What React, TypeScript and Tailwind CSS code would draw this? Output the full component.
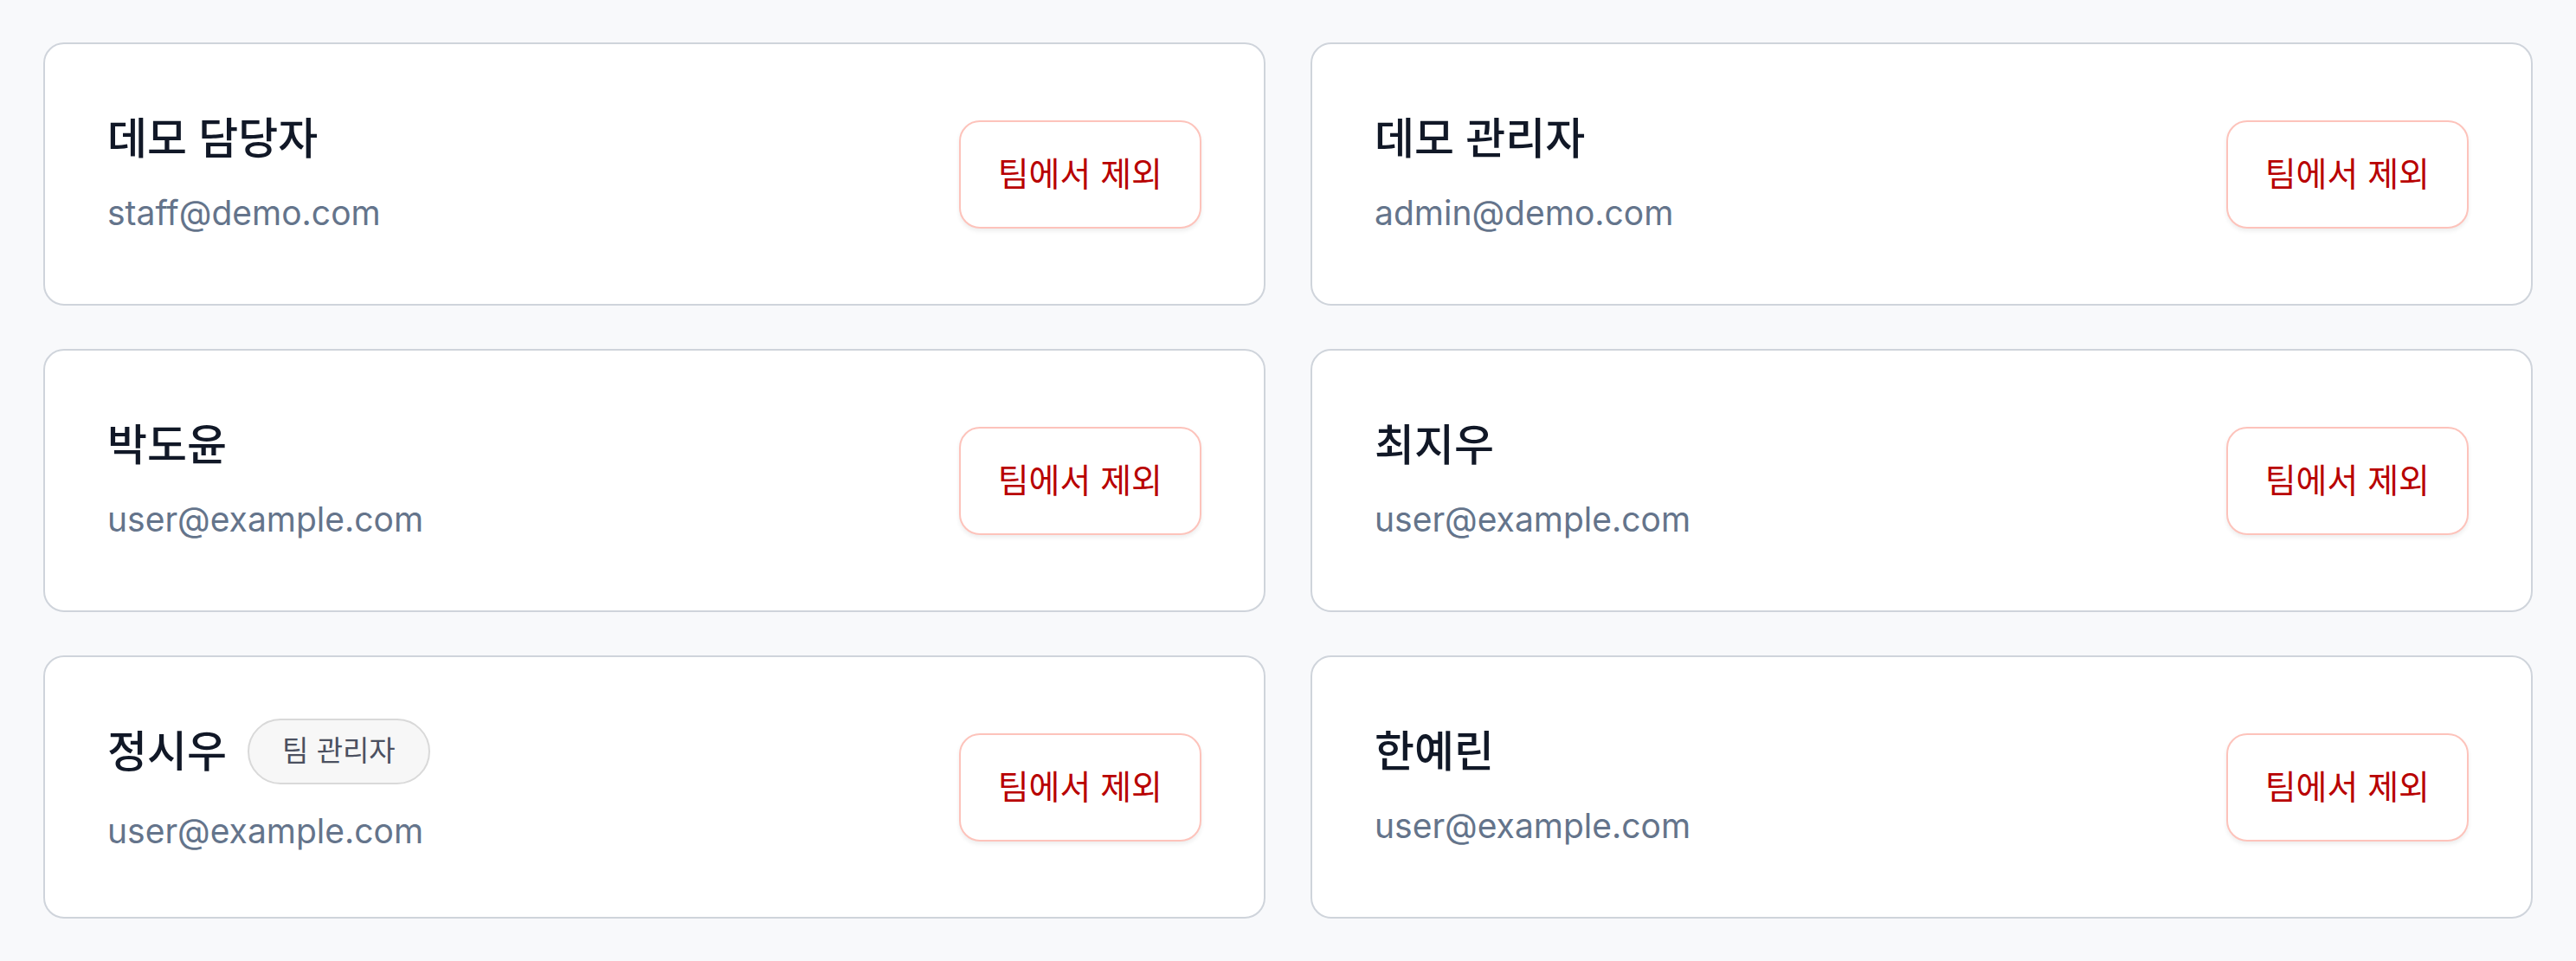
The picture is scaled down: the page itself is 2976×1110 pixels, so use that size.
import React from 'react';

interface Member {
  id: string;
  name: string;
  email: string;
  isTeamAdmin?: boolean;
}

const members: Member[] = [
  { id: '1', name: '데모 담당자', email: 'staff@demo.com' },
  { id: '2', name: '데모 관리자', email: 'admin@demo.com' },
  { id: '3', name: '박도윤', email: 'user@example.com' },
  { id: '4', name: '최지우', email: 'user@example.com' },
  { id: '5', name: '정시우', email: 'user@example.com', isTeamAdmin: true },
  { id: '6', name: '한예린', email: 'user@example.com' },
];

function MemberCard({ member }: { member: Member }) {
  return (
    <article className="flex h-[304px] items-center justify-between rounded-[24px] border-2 border-[#cfd4db] bg-white px-[72px]">
      <div className="flex flex-col">
        <div className="flex items-center gap-[24px]">
          <h3 className="text-[50px] leading-[64px] font-medium text-[#111827]">{member.name}</h3>
          {member.isTeamAdmin && (
            <span className="inline-flex h-[76px] items-center rounded-full border-2 border-[#d9d9d9] bg-[#f7f7f7] px-[38px] text-[33px] text-[#4b5060]">
              팀 관리자
            </span>
          )}
        </div>
        <p className="mt-[26px] text-[39px] leading-[56px] text-[#64748b]">{member.email}</p>
      </div>
      <button
        type="button"
        className="inline-flex h-[125px] items-center justify-center rounded-[24px] border-2 border-[#fdc3bb] bg-white px-[43px] text-[39px] font-normal text-[#b80000] shadow-[0_3px_5px_rgba(0,0,0,0.07)]"
      >
        팀에서 제외
      </button>
    </article>
  );
}

export default function App() {
  return (
    <div
      className="min-h-[1110px] bg-[#f8f9fb] pt-[49px] pr-[50px] pb-[48px] pl-[50px]"
      style={{ fontFamily: 'Inter, "Noto Sans CJK KR", "Noto Sans", sans-serif' }}
    >
      <div className="grid grid-cols-2 gap-x-[52px] gap-y-[50px]">
        {members.map((member) => (
          <MemberCard key={member.id} member={member} />
        ))}
      </div>
    </div>
  );
}
